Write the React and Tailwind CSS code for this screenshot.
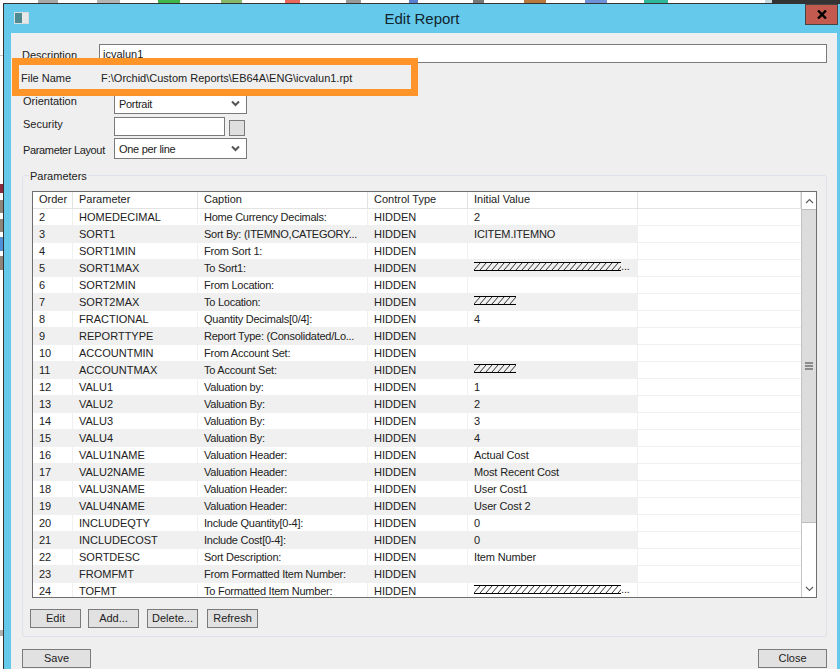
import React from 'react';

const rows = [
  ['2', 'HOMEDECIMAL', 'Home Currency Decimals:', '2'],
  ['3', 'SORT1', 'Sort By: (ITEMNO,CATEGORY...', 'ICITEM.ITEMNO'],
  ['4', 'SORT1MIN', 'From Sort 1:', ''],
  ['5', 'SORT1MAX', 'To Sort1:', 'long'],
  ['6', 'SORT2MIN', 'From Location:', ''],
  ['7', 'SORT2MAX', 'To Location:', 'short'],
  ['8', 'FRACTIONAL', 'Quantity Decimals[0/4]:', '4'],
  ['9', 'REPORTTYPE', 'Report Type: (Consolidated/Lo...', ''],
  ['10', 'ACCOUNTMIN', 'From Account Set:', ''],
  ['11', 'ACCOUNTMAX', 'To Account Set:', 'short'],
  ['12', 'VALU1', 'Valuation by:', '1'],
  ['13', 'VALU2', 'Valuation By:', '2'],
  ['14', 'VALU3', 'Valuation By:', '3'],
  ['15', 'VALU4', 'Valuation By:', '4'],
  ['16', 'VALU1NAME', 'Valuation Header:', 'Actual Cost'],
  ['17', 'VALU2NAME', 'Valuation Header:', 'Most Recent Cost'],
  ['18', 'VALU3NAME', 'Valuation Header:', 'User Cost1'],
  ['19', 'VALU4NAME', 'Valuation Header:', 'User Cost 2'],
  ['20', 'INCLUDEQTY', 'Include Quantity[0-4]:', '0'],
  ['21', 'INCLUDECOST', 'Include Cost[0-4]:', '0'],
  ['22', 'SORTDESC', 'Sort Description:', 'Item Number'],
  ['23', 'FROMFMT', 'From Formatted Item Number:', ''],
  ['24', 'TOFMT', 'To Formatted Item Number:', 'long'],
];

// bits of the desktop icons that stick out above the dialog
const topBits = [
  { gap: 'ml-[38px]', w: 'w-[20px]', color: 'bg-[#a8a8a8]' },
  { gap: 'ml-[39px]', w: 'w-[23px]', color: 'bg-[#b4b4b4]' },
  { gap: 'ml-[38px]', w: 'w-[22px]', color: 'bg-[#3fb54a]' },
  { gap: 'ml-[41px]', w: 'w-[21px]', color: 'bg-[#86b86a]' },
  { gap: 'ml-[43px]', w: 'w-[15px]', color: 'bg-[#e8685c]' },
  { gap: 'ml-[46px]', w: 'w-[15px]', color: 'bg-[#9a9a9a]' },
  { gap: 'ml-[48px]', w: 'w-[9px]', color: 'bg-[#5a7fd0]' },
  { gap: 'ml-[55px]', w: 'w-[11px]', color: 'bg-[#777777]' },
  { gap: 'ml-[40px]', w: 'w-[22px]', color: 'bg-[#b87a3c]' },
  { gap: 'ml-[39px]', w: 'w-[22px]', color: 'bg-[#6f8fd8]' },
  { gap: 'ml-[37px]', w: 'w-[24px]', color: 'bg-[#2fb79a]' },
  { gap: 'ml-[97px]', w: 'w-[7px]', color: 'bg-[#c8d8e0]' },
];

function Hatch({ width }) {
  const lines = [];
  for (let x = 0; x < width + 10; x += 6) {
    lines.push(<line key={x} x1={x - 6} y1="8" x2={x} y2="1" stroke="#000" strokeWidth="0.8" />);
  }
  return (
    <svg width={width} height="9" className="mt-[2px] block">
      {lines}
      <line x1="0" y1="0.5" x2={width} y2="0.5" stroke="#000" />
      <line x1="0" y1="8.5" x2={width} y2="8.5" stroke="#000" />
    </svg>
  );
}

function Value({ value }) {
  if (value === 'long') {
    return (
      <div className="flex items-end">
        <Hatch width={147} />
        <span className="leading-[10px]">...</span>
      </div>
    );
  }
  if (value === 'short') return <Hatch width={42} />;
  return value;
}

function Select({ value }) {
  return (
    <div className="flex h-[21px] w-[133px] items-center justify-between border border-[#7a7a7a] bg-white pl-[4px] pr-[6px]">
      <span className="translate-y-[1px] tracking-[-0.3px]">{value}</span>
      <svg width="9" height="7" viewBox="0 0 9 7">
        <path d="M1 1.5 L4.5 5 L8 1.5" fill="none" stroke="#555" strokeWidth="2" />
      </svg>
    </div>
  );
}

function Button({ children, width }) {
  return (
    <button className={`flex h-[19px] items-center justify-center border border-[#7a7a7a] bg-[#e1e1e1] ${width}`}>
      {children}
    </button>
  );
}

function Cell({ shaded, tracking = '', children }) {
  return (
    <div className={`overflow-hidden whitespace-nowrap border-r border-[#f0f0f0] pl-[6px] leading-[16px] ${tracking} ${shaded ? 'bg-[#f0f0f0]' : ''}`}>
      {children}
    </div>
  );
}

export default function App() {
  return (
    <div className="flex h-[669px] w-[840px] flex-col overflow-hidden bg-white font-['Liberation_Sans',sans-serif] text-[11px] text-[#222]">
      <div className="flex h-[3px] shrink-0">
        {topBits.map((b, i) => (
          <div key={i} className={`${b.gap} ${b.w} ${b.color}`} />
        ))}
        <div className="flex-1 bg-[#333]" />
      </div>

      <div className="flex min-h-0 flex-1">
        <div className="flex w-[3px] shrink-0 flex-col">
          <div className="mt-[52px] h-[1px] bg-[#cccccc]" />
          <div className="mt-[128px] h-[9px] bg-[#8a2a3a]" />
          <div className="mt-[7px] h-[13px] bg-[#8f8478]" />
          <div className="mt-[6px] h-[13px] bg-[#8f8478]" />
          <div className="mt-[5px] h-[14px] bg-[#4f8fd8]" />
          <div className="mt-[5px] h-[14px] bg-[#8f8478]" />
          <div className="mt-[360px] h-[6px] bg-[#b0b0b0]" />
        </div>

        <div className="flex min-w-0 flex-1 flex-col border-l border-t border-[#333] bg-[#65c9eb]">
          <div className="relative flex h-[29px] shrink-0 items-center justify-center text-[15px]">
            <div className="absolute left-[10px] top-[8px] h-[12px] w-[15px] border border-[#d8dde0] bg-[linear-gradient(90deg,#4d8a92_0_55%,#e8e8e8_55%)]" />
            <span className="translate-y-[1px] text-[#10242e]">Edit Report</span>
            <div className="absolute right-[2px] top-0 flex h-[21px] w-[33px] items-center justify-center border border-[#444] bg-[#c25a50]">
              <svg width="10" height="9" viewBox="0 0 10 9">
                <path d="M1 0.5 L9 8.5 M9 0.5 L1 8.5" stroke="#000" strokeWidth="2.4" />
              </svg>
            </div>
          </div>

          <div className="ml-[7px] mr-[3px] flex min-h-0 flex-1 flex-col bg-[#efefef] pl-[11px] pr-[10px] pt-[10px]">
            <div className="relative h-[132px] shrink-0">
              <div className="flex h-[20px] items-center">
                <span className="w-[77px] translate-y-[2px]">Description</span>
                <div className="flex h-[19px] flex-1 items-center border border-[#7a7a7a] bg-white pl-[3px]">
                  <span className="translate-y-[1px]">icvalun1</span>
                </div>
              </div>
              <div className="absolute -left-[10px] top-[15px] flex h-[38px] w-[406px] items-center border-[7px] border-[#ff9428] bg-[#efefef] pl-[2px]">
                <span className="w-[80px] translate-y-[1px]">File Name</span>
                <span className="translate-y-[1px]">F:\Orchid\Custom Reports\EB64A\ENG\icvalun1.rpt</span>
              </div>
              <div className="mt-[30px] flex h-[21px] items-center">
                <span className="w-[92px] -translate-y-[2px] pl-[1px]">Orientation</span>
                <Select value="Portrait" />
              </div>
              <div className="mt-[3px] flex h-[19px] items-center">
                <span className="w-[92px] -translate-y-[2px] pl-[1px]">Security</span>
                <div className="h-[19px] w-[111px] border border-[#7a7a7a] bg-white" />
                <div className="ml-[4px] mt-[2px] h-[16px] w-[16px] border border-[#7a7a7a] bg-[#dfdfdf]" />
              </div>
              <div className="mt-[2px] flex h-[21px] items-center">
                <span className="w-[92px] translate-y-[2px] whitespace-nowrap pl-[1px] tracking-[-0.35px]">Parameter Layout</span>
                <Select value="One per line" />
              </div>
            </div>

            <div className="relative h-[462px] shrink-0 rounded-[3px] border border-[#dce2e8] px-[9px] pt-[15px]">
              <span className="absolute left-[6px] -top-[8px] bg-[#efefef] px-[1px]">Parameters</span>
              <div className="flex h-[407px] border border-[#6e6e6e] bg-white">
                <div className="flex min-w-0 flex-1 flex-col overflow-hidden">
                  <div className="grid h-[17px] shrink-0 grid-cols-[40px_125px_170px_100px_170px_1fr] border-b border-[#e3e3e3]">
                    {['Order', 'Parameter', 'Caption', 'Control Type', 'Initial Value', ''].map((h, i) => (
                      <div key={i} className="overflow-hidden whitespace-nowrap border-r border-[#e3e3e3] pl-[6px] leading-[15px]">{h}</div>
                    ))}
                  </div>
                  {rows.map((r, i) => (
                    <div key={r[0]} className="grid h-[17px] shrink-0 grid-cols-[40px_125px_170px_100px_170px_1fr] border-b border-[#f0f0f0]">
                      <Cell shaded={i % 2}>{r[0]}</Cell>
                      <Cell shaded={i % 2}>{r[1]}</Cell>
                      <Cell shaded={i % 2} tracking="tracking-[-0.25px]">{r[2]}</Cell>
                      <Cell shaded={i % 2}>HIDDEN</Cell>
                      <Cell shaded={i % 2} tracking="tracking-[-0.15px]"><Value value={r[3]} /></Cell>
                      <div />
                    </div>
                  ))}
                </div>
                <div className="flex w-[15px] shrink-0 flex-col border-l border-[#c4c4c4]">
                  <div className="flex h-[17px] shrink-0 items-center justify-center bg-white">
                    <svg width="9" height="6" viewBox="0 0 9 6"><path d="M1 5 L4.5 1.5 L8 5" fill="none" stroke="#606060" strokeWidth="1.2" /></svg>
                  </div>
                  <div className="flex h-[314px] shrink-0 items-center justify-center border-y border-[#bdbdbd] bg-[#dcdcdc]">
                    <svg width="8" height="8" viewBox="0 0 8 8"><path d="M0 1 H8 M0 4 H8 M0 7 H8" stroke="#707070" strokeWidth="1.6" /></svg>
                  </div>
                  <div className="flex-1" />
                  <div className="flex h-[17px] shrink-0 items-center justify-center bg-white">
                    <svg width="9" height="6" viewBox="0 0 9 6"><path d="M1 1 L4.5 4.5 L8 1" fill="none" stroke="#606060" strokeWidth="1.2" /></svg>
                  </div>
                </div>
              </div>
              <div className="-ml-[2px] mt-[11px] flex">
                <Button width="w-[51px]">Edit</Button>
                <div className="w-[7px]" />
                <Button width="w-[51px]">Add...</Button>
                <div className="w-[8px]" />
                <Button width="w-[51px]">Delete...</Button>
                <div className="w-[9px]" />
                <Button width="w-[51px]">Refresh</Button>
              </div>
            </div>

            <div className="mt-[12px] flex justify-between">
              <Button width="w-[69px]">Save</Button>
              <Button width="w-[69px]">Close</Button>
            </div>
          </div>
        </div>
      </div>
    </div>
  );
}
